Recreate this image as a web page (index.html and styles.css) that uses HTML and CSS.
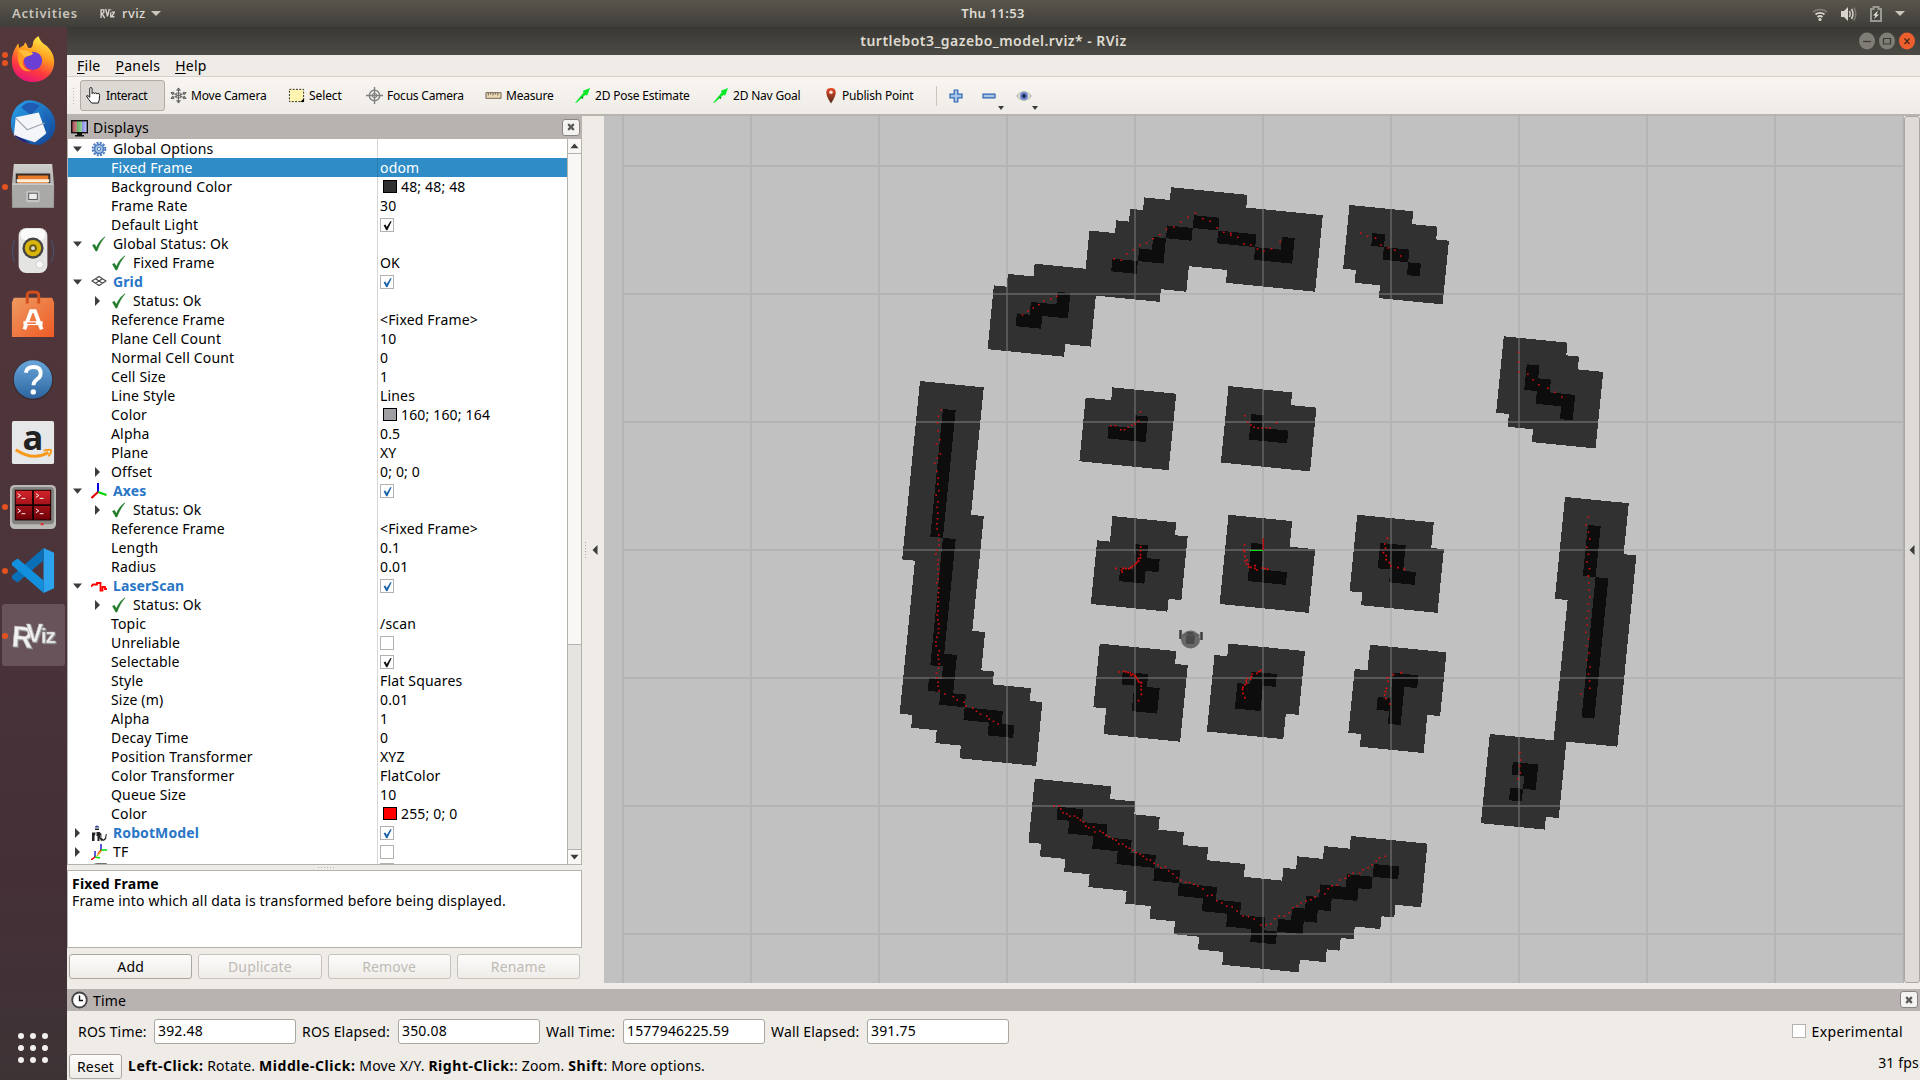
FILE: index.html
```html
<!DOCTYPE html>
<html lang="en">
<head>
<meta charset="utf-8">
<title>turtlebot3_gazebo_model.rviz* - RViz</title>
<link rel="stylesheet" href="styles.css">
</head>
<body>
<svg class="defs" width="0" height="0">
  <defs>
    <linearGradient id="fx" x1="0.7" y1="0" x2="0.3" y2="1"><stop offset="0" stop-color="#fff14a"/><stop offset=".4" stop-color="#ff9a1f"/><stop offset=".7" stop-color="#ff3b3f"/><stop offset="1" stop-color="#e3127c"/></linearGradient>
    <linearGradient id="tb" x1="0" y1="0" x2="1" y2="1"><stop offset="0" stop-color="#2aa4ee"/><stop offset="1" stop-color="#123f8f"/></linearGradient>
    <linearGradient id="mt" x1="0" y1="0" x2="0" y2="1"><stop offset="0" stop-color="#d0d0ce"/><stop offset="1" stop-color="#8c8c8a"/></linearGradient>
    <linearGradient id="hp" x1="0" y1="0" x2="0" y2="1"><stop offset="0" stop-color="#68a6da"/><stop offset="1" stop-color="#2d659f"/></linearGradient>
    <linearGradient id="sw" x1="0" y1="0" x2="1" y2="1"><stop offset="0" stop-color="#ee9a62"/><stop offset="1" stop-color="#ee5a24"/></linearGradient>
    <linearGradient id="rd" x1="0" y1="0" x2="0" y2="1"><stop offset="0" stop-color="#d3242a"/><stop offset="1" stop-color="#700008"/></linearGradient>
    <linearGradient id="pin" x1="0" y1="0" x2="0" y2="1"><stop offset="0" stop-color="#ea4a2a"/><stop offset="1" stop-color="#4a2c1a"/></linearGradient>
    <linearGradient id="scr" x1="0" y1="0" x2="1" y2="0"><stop offset="0" stop-color="#a84a50"/><stop offset=".33" stop-color="#c08a88"/><stop offset=".34" stop-color="#5fb45f"/><stop offset=".66" stop-color="#9ad09a"/><stop offset=".67" stop-color="#8c8cf0"/><stop offset="1" stop-color="#c8c8f8"/></linearGradient>
    <symbol id="check" viewBox="0 0 16 16"><path d="M1.500 9.200 3.400 8.300 5.400 11.500C7.500 6.500 10.500 3 14 .8 10.500 5 8 9.500 6 15H4.800Z" fill="#1e7a26" stroke="#1e7a26" stroke-width=".5"/></symbol>
    <symbol id="down" viewBox="0 0 10 6"><path d="M.5.5h9L5 5.700Z" fill="#3c3c3a"/></symbol>
    <symbol id="open" viewBox="0 0 19 10"><path d="M5 2.500h9L9.500 7.700Z" fill="#3c3c3a"/></symbol>
    <symbol id="right" viewBox="0 0 6 10"><path d="M.5 0v10L5.500 5Z" fill="#3c3c3a"/></symbol>
    <symbol id="tick" viewBox="0 0 14 14"><path d="M2.800 6.800 4.800 5.800l1.400 2.800L10 2.300h1.500L6.900 12H5.600Z" fill="currentColor"/></symbol>
    <symbol id="arrow2d" viewBox="0 0 18 18"><path d="M1 17 10 6 9.500 4 17 1 14 9 12 8.500 3 16.500Z" fill="#0be82c"/><path d="m7 10 3 1-1 2Z" fill="#087a18"/></symbol>
    <symbol id="close" viewBox="0 0 10 10"><path d="M1 1h2.500L5 3l1.500-2H9v2L7 5l2 2v2H6.500L5 7 3.500 9H1V7l2-2-2-2Z" fill="#5a5a58"/></symbol>
  </defs>
</svg>

<header class="topbar">
  <div class="top-left"><span>Activities</span><svg class="rvmini" viewBox="0 0 16 12"><path d="M1 11V2h3v3L2 6l3 5M6 1l2 8 2-8M11.500 5v5M12.500 4.500h3l-3 5h3M11.500 1.500v1" fill="none" stroke="#d8d5cf" stroke-width="1.500"/></svg><span>rviz</span><i class="tri"></i></div>
  <div class="clock">Thu 11:53</div>
  <div class="tray">
    <svg width="16" height="16" viewBox="0 0 16 16" fill="none" stroke-width="1.700"><path d="M1 6a10 8 0 0 1 14 0" stroke="#7d7b74"/><path d="M3.500 8.500a6.500 5.500 0 0 1 9 0M5.500 11a4 4 0 0 1 5 0" stroke="#d8d5cf"/><circle cx="8" cy="13.500" r="1.600" fill="#d8d5cf"/></svg>
    <svg width="17" height="16" viewBox="0 0 17 16"><path d="M1 5h3l4-4v14L4 11H1Z" fill="#d8d5cf"/><path d="M9.500 5q1.500 3 0 6M11.500 3q3 5 0 10" stroke="#d8d5cf" stroke-width="1.500" fill="none"/><path d="M14 1.500q3.500 6.500 0 13" stroke="#7d7b74" stroke-width="1.500" fill="none"/></svg>
    <svg width="14" height="18" viewBox="0 0 14 18"><path d="M2 4h2.500V2h5v2H12v12H2Z" stroke="#9a9892" stroke-width="2" fill="none"/><path d="M9 5.500 4 10.500h2.500L5 14l5-4.500H7.500Z" fill="#e6e4de"/></svg>
    <i class="tri"></i>
  </div>
</header>

<div class="desktop">
<nav class="dock">
  <div class="app"><i class="dot d1"></i><i class="dot d2"></i><svg viewBox="0 0 48 50"><path d="M24 50C10 50 1 40 1 28 1 20 4 14 8 8l1 5 5-3c1-2 1-3 2-3l3 6c4 1 5-3 5-6 1-3 3-5 6-7 2 6 5 8 9 11 5 5 8 10 8 17 0 13-10 22-23 22Z" fill="url(#fx)"/><circle cx="24" cy="27" r="10" fill="#6b3fd4"/><path d="M8 14c5-1 12 0 16 5-3 3-7 2-10 6-3 5 1 12 8 13-10 2-17-6-14-24Z" fill="#ff9b22"/><path d="M8 15c6 0 12 1 16 4-3 3-6 2-9 4Z" fill="#ffbd3c"/></svg></div>
  <div class="app"><svg viewBox="0 0 48 48"><path d="M12 3C20-3 34 2 42 11c8 10 7 24-2 31l-8 5C15 46 0 42 1 22 2 13 6 6 12 3Z" fill="url(#tb)"/><path d="M12 8c3-6 12-7 19-2L22 16Z" fill="#1d5cb0"/><path d="m6 18 24-5 8 22-12 9L4 37Z" fill="#f4f5f8"/><path d="m6 19 12 12 18-7" fill="none" stroke="#9ea6b2" stroke-width="1.200"/><path d="M4 36c5 6 12 9 17 9l-7-4Z" fill="#2b1a6e"/><path d="M34 12c8 6 10 18 1 27 8-10 3-20-1-27Z" fill="#1b60b8"/></svg></div>
  <div class="app"><i class="dot"></i><svg viewBox="0 0 48 48"><path d="M4 0h40l2 22v24H2V22Z" fill="url(#mt)"/><path d="M6 10h36v12H6Z" fill="#332c28"/><path d="M8 12h32v10H8Z" fill="#e87a28"/><path d="M7 16h34v3H7Z" fill="#fff0dc"/><path d="M3 20h42v25H3Z" fill="#a9aaa8"/><path d="M3 20h42v2H3Z" fill="#c8c8c6"/><rect x="17" y="28" width="14" height="12" rx="2" fill="#c4c4c2"/><rect x="19.500" y="30.500" width="9" height="6.500" fill="#eee" stroke="#555"/></svg></div>
  <div class="app"><svg viewBox="0 0 48 48"><path d="M5 12q-5 12 0 24M43 12q5 12 0 24" fill="none" stroke="#48506e" stroke-width="1.200"/><rect x="9" y="0" width="30" height="47" rx="8" fill="#e4e5e3"/><rect x="11" y="1" width="26" height="12" rx="6" fill="#fafafa"/><circle cx="24" cy="21" r="11" fill="#444"/><circle cx="24" cy="21" r="8.500" fill="#d8b40c"/><circle cx="24" cy="21" r="4" fill="#6e5c10"/><circle cx="24" cy="21" r="2" fill="#ddd"/><circle cx="31" cy="38" r="4" fill="#f7f7f7" stroke="#ccc"/></svg></div>
  <div class="app"><svg viewBox="0 0 48 48"><path d="M18 11V3q0-3 6-3t6 3v8" fill="none" stroke="#d24f1d" stroke-width="3"/><path d="M4 6h40l2 5v36H2V11Z" fill="url(#sw)"/><path d="M18 12V6M30 12V6" stroke="#d24f1d" stroke-width="3"/><path d="m15 39 7-19h4l7 19" fill="none" stroke="#fff" stroke-width="4"/><path d="M14 32.500h20" stroke="#fff" stroke-width="4"/><path d="M18 32.500h9" stroke="#ee6a30" stroke-width="1.500"/></svg></div>
  <div class="app"><svg viewBox="0 0 48 48"><circle cx="24" cy="25" r="21" fill="#3a2a30"/><circle cx="24" cy="24.500" r="20" fill="url(#hp)"/><path d="M16.500 17.500q1-6 8-6 7.500 0 7.500 6.500 0 4-4 6.500-3.500 2.500-3.500 6" fill="none" stroke="#fff" stroke-width="4"/><circle cx="24.300" cy="37.500" r="2.800" fill="#fff"/></svg></div>
  <div class="app"><svg viewBox="0 0 48 48"><rect x="2" y="1" width="44" height="45" rx="2" fill="#e6e7e8"/><text x="24" y="31" class="amz">a</text><path d="M6 31q18 12 34 3" fill="none" stroke="#f79a1c" stroke-width="3"/><path d="M35 32q8-2 8 0t-3 6" fill="none" stroke="#f79a1c" stroke-width="2"/></svg></div>
  <div class="app"><i class="dot"></i><svg viewBox="0 0 48 48"><rect x="0" y="1" width="48" height="46" rx="5" fill="#b9bab5"/><rect x="2" y="3" width="44" height="39" rx="4" fill="#83847f"/><rect x="5" y="6" width="38" height="32" fill="#170002"/><path d="M6 7h17v14H6ZM25 7h17v14H25ZM6 23h17v14H6ZM25 23h17v14H25Z" fill="url(#rd)"/><path d="m8 10 3 2-3 2m4 1h4M27 10l3 2-3 2m4 1h4M8 26l3 2-3 2m4 1h4M27 26l3 2-3 2m4 1h4" fill="none" stroke="#fff" stroke-width="1"/><path d="M32 42h3" stroke="#e22" stroke-width="2"/></svg></div>
  <div class="app"><i class="dot"></i><svg viewBox="0 0 48 48"><path d="M35 0 46 5v37l-11 5Z" fill="#2da3ee"/><path d="M35 0v13L8 36l-6-4v-3Z" fill="#0a6fb6"/><path d="M35 47V34L8 11l-6 4v3Z" fill="#1390dd"/></svg></div>
  <div class="app active"><i class="dot"></i><svg viewBox="0 0 48 48"><g class="rvz"><text x="1" y="36" class="r1" transform="rotate(5 4 36)">R</text><text x="17" y="31" class="r2">V</text><text x="32" y="32" class="r3">iz</text></g></svg></div>
  <div class="grid-btn"><i></i><i></i><i></i><i></i><i></i><i></i><i></i><i></i><i></i></div>
</nav>

<main class="window">
  <div class="titlebar"><span>turtlebot3_gazebo_model.rviz* - RViz</span>
    <div class="winbtns">
      <svg viewBox="0 0 16 20"><ellipse cx="8" cy="10" rx="8" ry="8.500" fill="#7f7d76"/><path d="M4 10.500h8" stroke="#3c3b37" stroke-width="1.200"/></svg>
      <svg viewBox="0 0 16 20"><ellipse cx="8" cy="10" rx="8" ry="8.500" fill="#7f7d76"/><path d="M4.500 7.500h7v5.500h-7Z" fill="none" stroke="#3c3b37" stroke-width="1.200"/></svg>
      <svg viewBox="0 0 16 20"><ellipse cx="8" cy="10" rx="8" ry="8.500" fill="#ee5f30"/><path d="m5.500 7.500 5 5.500m0-5.500-5 5.500" stroke="#4a2a1a" stroke-width="1.300"/></svg>
    </div>
  </div>
  <div class="menubar"><span><u>F</u>ile</span><span><u>P</u>anels</span><span><u>H</u>elp</span></div>
  <div class="toolbar">
    <i class="grip"></i>
    <div class="tool t1 on"><svg viewBox="0 0 18 18"><path d="M5 11V2q0-1.500 1.200-1.500T7.500 2v5q.2-1 1.300-1T10 7q.2-.8 1.300-.8T12.500 7.500q.2-.8 1.300-.8 1.700 0 1.700 2.300 0 5-1.500 8H7Q3.500 13 1.500 9.500 3 8 5 11Z" fill="#fff" stroke="#111"/></svg>Interact</div>
    <div class="tool t2"><svg viewBox="0 0 18 18"><path d="M9 1v16M1 6l16 6M1 12l16-6M9 1 7 3.500h4ZM9 17l-2-2.500h4ZM1 6l3-.5-1 3ZM17 12l-3 .5 1-3ZM1 12l3 .5-1-3ZM17 6l-3-.5 1 3ZM6.500 6.500h5v5h-5Z" fill="#fff" stroke="#555" stroke-width=".9"/></svg>Move Camera</div>
    <div class="tool t3"><svg viewBox="0 0 18 18"><rect x="1.500" y="2.500" width="15" height="13" fill="#fff3b0" stroke="#222" stroke-dasharray="2 1.500"/><path d="M17 12v4h-4Z"/></svg>Select</div>
    <div class="tool t4"><svg viewBox="0 0 18 18"><g fill="none" stroke="#808080"><circle cx="9" cy="9" r="5.500" stroke-width="1.500"/><circle cx="9" cy="9" r="2.500"/><path d="M9 0v18M0 9h18" stroke-width="1.500"/></g></svg>Focus Camera</div>
    <div class="tool t5"><svg viewBox="0 0 18 18"><path d="M1 6h16v6H1Z" fill="#e8d8b4" stroke="#6e6250"/><path d="M3.500 6v3M6 6v2M8.500 6v3M11 6v2M13.500 6v3" stroke="#6e6250"/></svg>Measure</div>
    <div class="tool t6"><svg><use href="#arrow2d"/></svg>2D Pose Estimate</div>
    <div class="tool t7"><svg><use href="#arrow2d"/></svg>2D Nav Goal</div>
    <div class="tool t8"><svg viewBox="0 0 14 18"><path d="M7 17.500Q2 10 2 5.500 2 1 7 1t5 4.500Q12 10 7 17.500Z" fill="url(#pin)"/><circle cx="7" cy="5.500" r="1.900" fill="#ffe0d8"/></svg>Publish Point</div>
    <i class="sep"></i>
    <svg class="tb" viewBox="0 0 14 14"><path d="M5.200 1h3.600v4.200H13v3.600H8.800V13H5.200V8.800H1V5.200h4.200Z" fill="#a9c6ea" stroke="#2f66b0" stroke-width="1.200"/></svg>
    <svg class="tb" viewBox="0 0 14 14"><path d="M1 5.200h12v3.600H1Z" fill="#a9c6ea" stroke="#2f66b0" stroke-width="1.200"/></svg>
    <i class="mini"></i>
    <svg class="tb eye" viewBox="0 0 16 14"><path d="M.5 7Q8-2 15.500 7 8 16 .5 7Z" fill="#dcdcdc" stroke="#aaa"/><circle cx="8" cy="7" r="3.800" fill="#5a7cc4"/><circle cx="8" cy="7" r="1.700" fill="#111c3c"/></svg>
    <i class="mini"></i>
  </div>

  <div class="work">
    <section class="displays">
      <div class="phead"><svg width="17" height="18" viewBox="0 0 17 18"><rect x=".7" y="1.700" width="15.600" height="12" fill="url(#scr)" stroke="#111" stroke-width="1.400"/><path d="M6 14h5v2h2v1.500H4V16h2Z" fill="#111"/></svg><span>Displays</span><b class="x"><svg><use href="#close"/></svg></b></div>
      <div class="treebox">
        <div class="tree">
          <div class="row"><div class="n"><svg class="tw"><use href="#open"/></svg><svg class="ic" viewBox="0 0 16 16"><circle cx="8" cy="8" r="6.300" fill="none" stroke="#4a78bc" stroke-width="2" stroke-dasharray="2 1.300"/><circle cx="8" cy="8" r="4.500" fill="#a7c4e6" stroke="#4a78bc" stroke-width="1.500"/><circle cx="8" cy="8" r="1.600" fill="#fff" stroke="#4a78bc"/></svg>Global Options</div><div class="v"></div></div>
          <div class="row sel"><div class="n p">Fixed Frame</div><div class="v">odom</div></div>
          <div class="row"><div class="n p">Background Color</div><div class="v"><i class="sw dark"></i>48; 48; 48</div></div>
          <div class="row"><div class="n p">Frame Rate</div><div class="v">30</div></div>
          <div class="row"><div class="n p">Default Light</div><div class="v"><i class="cb"><svg><use href="#tick"/></svg></i></div></div>
          <div class="row"><div class="n"><svg class="tw"><use href="#open"/></svg><svg class="ic"><use href="#check"/></svg>Global Status: Ok</div><div class="v"></div></div>
          <div class="row"><div class="n l1"><i class="tw"></i><svg class="ic"><use href="#check"/></svg>Fixed Frame</div><div class="v">OK</div></div>
          <div class="row"><div class="n hd"><svg class="tw"><use href="#open"/></svg><svg class="ic" viewBox="0 0 16 16"><path d="m8 2.500 7 4.500-7 4.500L1 7Zm-3.500 2.300 7 4.500m0-4.500-7 4.500" fill="none" stroke="#444" stroke-width="1.100"/></svg>Grid</div><div class="v"><i class="cb blue"><svg><use href="#tick"/></svg></i></div></div>
          <div class="row"><div class="n l1"><svg class="tw"><use href="#right"/></svg><svg class="ic"><use href="#check"/></svg>Status: Ok</div><div class="v"></div></div>
          <div class="row"><div class="n p">Reference Frame</div><div class="v">&lt;Fixed Frame&gt;</div></div>
          <div class="row"><div class="n p">Plane Cell Count</div><div class="v">10</div></div>
          <div class="row"><div class="n p">Normal Cell Count</div><div class="v">0</div></div>
          <div class="row"><div class="n p">Cell Size</div><div class="v">1</div></div>
          <div class="row"><div class="n p">Line Style</div><div class="v">Lines</div></div>
          <div class="row"><div class="n p">Color</div><div class="v"><i class="sw gray"></i>160; 160; 164</div></div>
          <div class="row"><div class="n p">Alpha</div><div class="v">0.5</div></div>
          <div class="row"><div class="n p">Plane</div><div class="v">XY</div></div>
          <div class="row"><div class="n l1"><svg class="tw"><use href="#right"/></svg>Offset</div><div class="v">0; 0; 0</div></div>
          <div class="row"><div class="n hd"><svg class="tw"><use href="#open"/></svg><svg class="ic" viewBox="0 0 16 16" fill="none" stroke-width="2"><path d="M7 0v9" stroke="#0000e0"/><path d="m7 9 8.500 3" stroke="#00d800"/><path d="m7 9-6.500 6" stroke="#e00000"/></svg>Axes</div><div class="v"><i class="cb blue"><svg><use href="#tick"/></svg></i></div></div>
          <div class="row"><div class="n l1"><svg class="tw"><use href="#right"/></svg><svg class="ic"><use href="#check"/></svg>Status: Ok</div><div class="v"></div></div>
          <div class="row"><div class="n p">Reference Frame</div><div class="v">&lt;Fixed Frame&gt;</div></div>
          <div class="row"><div class="n p">Length</div><div class="v">0.1</div></div>
          <div class="row"><div class="n p">Radius</div><div class="v">0.01</div></div>
          <div class="row"><div class="n hd"><svg class="tw"><use href="#open"/></svg><svg class="ic" viewBox="0 0 16 16"><path d="M0 8.500 2 6.500h4V5h3.500v7.500h2V9h2.500v2h2" fill="none" stroke="#f00" stroke-width="1.800"/></svg>LaserScan</div><div class="v"><i class="cb blue"><svg><use href="#tick"/></svg></i></div></div>
          <div class="row"><div class="n l1"><svg class="tw"><use href="#right"/></svg><svg class="ic"><use href="#check"/></svg>Status: Ok</div><div class="v"></div></div>
          <div class="row"><div class="n p">Topic</div><div class="v">/scan</div></div>
          <div class="row"><div class="n p">Unreliable</div><div class="v"><i class="cb"></i></div></div>
          <div class="row"><div class="n p">Selectable</div><div class="v"><i class="cb"><svg><use href="#tick"/></svg></i></div></div>
          <div class="row"><div class="n p">Style</div><div class="v">Flat Squares</div></div>
          <div class="row"><div class="n p">Size (m)</div><div class="v">0.01</div></div>
          <div class="row"><div class="n p">Alpha</div><div class="v">1</div></div>
          <div class="row"><div class="n p">Decay Time</div><div class="v">0</div></div>
          <div class="row"><div class="n p">Position Transformer</div><div class="v">XYZ</div></div>
          <div class="row"><div class="n p">Color Transformer</div><div class="v">FlatColor</div></div>
          <div class="row"><div class="n p">Queue Size</div><div class="v">10</div></div>
          <div class="row"><div class="n p">Color</div><div class="v"><i class="sw red"></i>255; 0; 0</div></div>
          <div class="row"><div class="n hd"><svg class="tw"><use href="#right"/></svg><svg class="ic" viewBox="0 0 16 16"><path d="M3.500 2.500q2.500-4 5 0Z" fill="#2a3f9a"/><path d="M4 3.500h4V5H4ZM1 7.500h3v3H3.500V16H1V7.500ZM5.500 7h3l2 2v4l2 1.500 1.500-1.500.8-4h1l-.8 5-2 1.800h-3L8.500 13v3H6.500v-5h-1Z" fill="#222"/><path d="M4 7h1.200v3H4ZM9.500 10h1v3h-1Z" fill="#bbb"/></svg>RobotModel</div><div class="v"><i class="cb blue"><svg><use href="#tick"/></svg></i></div></div>
          <div class="row"><div class="n"><svg class="tw"><use href="#right"/></svg><svg class="ic" viewBox="0 0 16 16" fill="none" stroke-width="1.500"><path d="M10 0v6M4 7v6" stroke="#22c"/><path d="M10 6h6M4 13l5 1" stroke="#0d0"/><path d="m10 6-3 4M4 13l-4 3" stroke="#e00"/><path d="m10 7-4 5" stroke="#e8b020"/></svg>TF</div><div class="v"><i class="cb"></i></div></div>
          <div class="row"><div class="n"><i class="tw"></i><svg class="ic up1" viewBox="0 0 16 16"><path d="M1 14V3l5-1h9v12Z" fill="#ccc" stroke="#444" stroke-width="1.500"/></svg></div><div class="v"><i class="cb up1"></i></div></div>
        </div>
        <div class="scroll"><div class="sb"><svg class="up"><use href="#down"/></svg></div><div class="thumb"></div><div class="track"></div><div class="sb"><svg><use href="#down"/></svg></div></div>
      </div>
      <div class="hsplit"></div>
      <div class="desc"><b>Fixed Frame</b><br>Frame into which all data is transformed before being displayed.</div>
      <div class="btns"><div class="btn">Add</div><div class="btn off">Duplicate</div><div class="btn off">Remove</div><div class="btn off">Rename</div></div>
    </section>
    <div class="vsplit"><i></i><svg><use href="#right"/></svg></div>
    <svg class="view" viewBox="604 116 1300 867">
      <rect x="604" y="116" width="1300" height="867" fill="#c1c1c1"/>
      <g transform="matrix(12.747 1.272 -1.272 12.747 920 381)" shape-rendering="crispEdges">
        <g fill="#313131">
          <path d="M0 0h5v10h1v9h1v3h1v1h3v1h1v5h-6v-1h-2v-1h-2v-1h-1v-12h-1Z"/>
          <path d="M18-17h6v1h6v6h-7v-1h-3v2h-2v1h-5v4h-2v1h-6v-5h1v-1h2v-1h4v-3h2v-1h1v-1h1v-1h2Z"/>
          <path d="M32-17h5v1h2v1h1v5h-5v-1h-2v-1h-1Z"/>
          <path d="M45-8h5v1h1v1h2v6h-5v-1h-2v-1h-1Z"/>
          <path d="M15-1h5v6h-7v-5h2Z"/>
          <path d="M24-2h5v1h2v5h-7Z"/>
          <path d="M16 9h5v1h1v5h-1v1h-6v-5h1Z"/>
          <path d="M25 8h5v2h2v5h-7Z"/>
          <path d="M35 7h6v2h1v5h-6v-1h-1Z"/>
          <path d="M16 19h6v1h1v6h-6v-2h-1Z"/>
          <path d="M26 18h6v5h-1v2h-6v-6h1Z"/>
          <path d="M37 17h6v5h-1v3h-5v-1h-1v-5h1Z"/>
          <path d="M51 4h5v4h1v15h-4v6h-1v1h-5v-7h5v-11h-1Z"/>
          <path d="M12 30h6v1h2v1h2v1h2v1h2v1h3v1h3v-1h1v-1h2v-1h2v-1h6v5h-2v1h-1v1h-2v1h-1v1h-1v1h-2v1h-6v-1h-2v-1h-2v-1h-2v-1h-2v-1h-3v-1h-2v-1h-2v-1h-1Z"/>
        </g>
        <path fill="#0d0d0d" d="M2 2h1v10h-1ZM3 12h1v10h-1ZM4 21h1v3h-1ZM3 23h1v1h-1ZM4 24h2v1h-2ZM6 25h3v1h-3ZM8 26h2v1h-2Z
          M20-15h2v1h-2ZM18-14h2v1h-2ZM17-13h1v2h-1ZM16-12h2v1h-2ZM14-11h2v1h-2ZM22-14h3v1h-3ZM25-13h3v1h-3ZM27-14h1v1h-1ZM10-8h1v2h-1ZM8-7h2v1h-2ZM7-6h2v1h-2Z
          M34-15h1v1h-1ZM35-14h2v1h-2ZM37-13h1v1h-1ZM47-6h1v2h-1ZM48-5h1v2h-1ZM49-4h2v1h-2ZM50-3h1v1h-1Z
          M15 2h3v1h-3ZM17 1h1v1h-1ZM26 0h1v2h-1ZM26 1h3v1h-3ZM18 11h1v3h-1ZM17 13h1v1h-1ZM19 12h1v1h-1ZM27 10h1v3h-1ZM28 12h2v1h-2Z
          M37 9h2v2h-2ZM38 11h2v1h-2ZM18 21h2v1h-2ZM19 22h2v2h-2ZM28 20h2v1h-2ZM27 21h2v2h-2ZM39 19h2v1h-2ZM39 20h1v3h-1ZM38 21h1v1h-1Z
          M53 6h1v4h-1ZM54 10h1v11h-1ZM49 25h2v1h-2ZM50 26h1v1h-1ZM49 27h1v1h-1Z
          M14 32h2v1h-2ZM15 33h3v1h-3ZM17 34h3v1h-3ZM19 35h3v1h-3ZM22 36h2v1h-2ZM24 37h3v1h-3ZM26 38h3v1h-3ZM28 39h3v1h-3ZM30 40h2v1h-2ZM32 39h2v1h-2ZM33 38h2v1h-2ZM34 37h2v1h-2ZM35 36h3v1h-3ZM37 35h2v1h-2ZM39 34h2v1h-2Z"/>
      </g>
      <path class="gl" d="M623 116v867M751 116v867M879 116v867M1007 116v867M1135 116v867M1263 116v867M1391 116v867M1519 116v867M1647 116v867M1775 116v867M1903.500 116v867M623 166h1281M623 294h1281M623 422h1281M623 550h1281M623 678h1281M623 806h1281M623 934h1281"/>
      <g class="scan">
        <path transform="translate(960 170) scale(.3333)" d="M185 435h5M201 424h5M217 414h5M234 404h5M249 392h5M270 387h5M288 379h5M460 267h5M481 271h5M498 251h5M518 239h5M537 226h5M557 219h5M577 206h5M597 194h5M617 177h5M639 171h5M660 156h5M682 142h5M704 129h5M726 146h5M748 154h5M769 173h5M789 187h5M810 190h5M810 196h5M831 202h5M849 222h5M870 225h5M890 237h5M909 243h5M932 236h5M958 215h5M1200 189h5M1220 199h5M1244 204h5M1260 225h5M1283 234h5M1302 241h5M1320 258h5M450 767h5M464 767h5M480 779h5M491 779h5M502 771h5M513 766h5M523 762h5M533 753h5M539 725h5M852 737h5M861 757h5M870 765h5M880 772h5M892 774h5M904 774h5M917 774h5M928 775h5M947 759h5"/>
        <path transform="translate(1440 300) scale(.3333)" d="M233 157h5M233 187h5M234 217h5M261 223h5M277 239h5M294 254h5M321 265h5M342 277h5M363 291h5M443 651h5M435 675h5M443 697h5M447 717h5M438 742h5M443 763h5M438 785h5M446 806h5M443 828h5"/>
        <path transform="translate(880 370) scale(.3333)" d="M181 120h5M173 139h5M170 158h5M171 182h5M177 209h5M167 222h5M179 252h5M170 265h5M162 280h5M168 303h5M172 325h5M171 343h5M174 362h5M166 376h5M171 395h5M169 412h5M171 429h5M170 446h5M168 461h5M169 477h5M174 495h5M174 511h5M175 525h5M169 540h5M165 553h5M172 570h5M171 583h5M171 598h5M173 612h5M172 626h5M168 639h5M174 655h5M173 668h5M172 682h5M173 695h5M171 709h5M172 722h5M169 735h5M171 749h5M174 762h5M173 776h5M173 789h5M168 802h5M165 815h5M166 828h5M175 842h5M172 855h5M173 868h5M175 882h5M173 895h5M167 909h5M169 923h5M172 937h5M172 949h5M175 962h5M192 972h5M218 980h5M229 990h5M250 997h5M255 1009h5M276 1015h5M287 1024h5M299 1033h5M318 1038h5M325 1047h5M338 1054h5M352 1062h5"/>
        <path class="near" transform="translate(1060 480) scale(.3333)" d="M165 265h5M182 270h5M184 276h5M187 265h5M195 266h5M204 266h5M210 263h5M215 259h5M221 255h5M226 250h5M230 245h5M233 236h5M239 233h5M234 243h5M239 224h5M239 212h5M240 201h5M551 195h5M548 210h5M551 215h5M552 229h5M553 243h5M559 240h5M557 252h5M563 253h5M564 261h5M570 262h5M583 257h5M582 265h5M588 270h5M604 264h5M613 266h5M621 268h5M980 175h5M972 192h5M974 205h5M968 218h5M976 227h5M976 239h5M986 248h5M990 258h5M1012 263h5M1031 268h5M175 576h5M188 574h5M195 576h5M202 577h5M209 579h5M211 586h5M216 583h5M222 587h5M226 592h5M230 597h5M232 603h5M236 607h5M242 608h5M241 618h5M241 629h5M242 643h5M233 662h5M600 571h5M595 575h5M588 580h5M574 582h5M572 590h5M570 597h5M559 596h5M556 603h5M557 610h5M552 615h5M546 622h5M545 628h5M547 640h5M552 653h5M1021 578h5M998 584h5M980 593h5M982 604h5M977 625h5M974 635h5M972 645h5M975 656h5M987 672h5"/>
        <path transform="translate(1010 740) scale(.3333)" d="M130 199h5M145 197h5M150 207h5M157 218h5M168 222h5M177 229h5M191 228h5M200 233h5M209 241h5M218 247h5M225 259h5M234 263h5M249 261h5M252 276h5M267 273h5M277 278h5M286 286h5M295 290h5M306 297h5M316 301h5M324 312h5M336 312h5M346 320h5M356 325h5M366 331h5M376 338h5M387 343h5M397 349h5M407 358h5M419 360h5M430 370h5M441 375h5M451 384h5M464 380h5M474 393h5M486 401h5M499 413h5M510 421h5M524 427h5M536 428h5M549 433h5M561 438h5M576 447h5M590 467h5M603 466h5M618 482h5M633 489h5M648 498h5M664 500h5M679 513h5M697 528h5M713 530h5M730 537h5M750 555h5M766 555h5M780 552h5M792 536h5M805 528h5M821 528h5M835 518h5M846 503h5M859 497h5M870 489h5M886 483h5M900 479h5M913 472h5M923 453h5M942 462h5M952 446h5M963 437h5M979 435h5M987 420h5M1003 415h5M1014 407h5M1027 399h5M1047 400h5M1057 389h5M1072 383h5M1084 374h5M1096 363h5M1106 353h5M1123 349h5"/>
        <path transform="translate(1420 540) scale(.3333)" d="M503 108h5M504 129h5M504 151h5M507 171h5M503 192h5M503 214h5M497 235h5M499 255h5M495 277h5M503 297h5M497 318h5M505 339h5M498 359h5M508 381h5M503 402h5M506 423h5M507 445h5M480 463h5M297 638h5M300 660h5M297 678h5M298 698h5M291 716h5"/>
      </g>
      <path d="M1263.300 538v12" stroke="#b00f14" stroke-width="1.500"/><path d="M1250 550.500h13" stroke="#0be010" stroke-width="1"/>
      <path d="M1180.500 630v9M1201.500 632v8" stroke="#3c3c3c" stroke-width="2.500"/><ellipse cx="1190.500" cy="639.500" rx="9.500" ry="9" fill="#686868"/><path d="M1187 632h6l2 5-1 7h-8v-6Z" fill="#4a4a4a"/><path d="M1182 635h18" stroke="#585858"/>
    </svg>
    <div class="rsplit"><svg><use href="#right"/></svg></div>
  </div>

  <div class="phead time"><svg width="17" height="18" viewBox="0 0 17 18"><ellipse cx="8.500" cy="9" rx="7.300" ry="7.500" fill="#fff" stroke="#444" stroke-width="1.800"/><path d="M8.500 4.500V9.500H12" fill="none" stroke="#111" stroke-width="1.400"/></svg><span>Time</span><b class="x"><svg><use href="#close"/></svg></b></div>
  <div class="fields">
    <label class="f1">ROS Time:</label><div class="in">392.48</div>
    <label class="f2">ROS Elapsed:</label><div class="in">350.08</div>
    <label class="f3">Wall Time:</label><div class="in">1577946225.59</div>
    <label class="f4">Wall Elapsed:</label><div class="in">391.75</div>
    <div class="exp"><i class="cb"></i>Experimental</div>
  </div>
  <div class="status"><div class="btn">Reset</div><div class="hint"><b>Left-Click:</b> Rotate. <b>Middle-Click:</b> Move X/Y. <b>Right-Click:</b>: Zoom. <b>Shift</b>: More options.</div><div class="fps">31 fps</div></div>
</main>
</div>
</body>
</html>
```
FILE: styles.css
```css
* { box-sizing: border-box; }
body {
  margin: 0; width: 1920px; height: 1080px; overflow: hidden;
  display: flex; flex-direction: column;
  font: 14px/19px "Noto Sans", sans-serif; letter-spacing: .17px;
  color: #000; background: #efebe7;
}
i { font-style: normal; }
svg { display: block; flex: none; }
.defs { position: absolute; }

/* top bar */
.topbar {
  height: 27px; flex: none; display: grid; grid-template-columns: 945px 72px 1fr; align-items: center;
  background: linear-gradient(#5a564e, #3f3e39); color: #dfdbd2; font-size: 13px;
  padding: 0 15px 0 12px;
}
.top-left { display: flex; align-items: center; }
.top-left span { font-weight: 500; letter-spacing: .4px; }
.top-left span:first-child { width: 88px; color: #c9c5bc; font-weight: 600; letter-spacing: .8px; }
.rvmini { width: 15px; height: 11px; margin-right: 7px; }
.tri { border: 5px solid transparent; border-top-color: #c9c5bc; border-bottom: 0; margin-left: 5px; }
.clock { font-weight: 600; text-align: center; letter-spacing: .3px; white-space: nowrap; }
.tray { display: flex; justify-content: flex-end; align-items: center; gap: 12px; }
.tray .tri { margin: 0; }

.desktop { flex: 1; display: flex; min-height: 0; }

/* dock */
.dock {
  width: 67px; flex: none; display: flex; flex-direction: column; align-items: center;
  background: linear-gradient(#54373a, #4b343a 50%, #452f37 80%, #3d3335);
}
.app { position: relative; width: 63px; height: 64px; display: flex; align-items: center; justify-content: center; margin-right: 1px; }
.app svg { width: 46px; height: 46px; overflow: visible; }
.app.active { height: 62px; margin-top: 1px; background: #68535a; border-radius: 3px; }
.dot { position: absolute; left: 0; top: 29px; width: 6px; height: 6px; border-radius: 3px; background: #e4521f; }
.d1 { top: 25px; }
.d2 { top: 33px; }
.amz { font: bold 36px "Open Sans", sans-serif; fill: #222; text-anchor: middle; }
.rvz { fill: #f0f0f0; stroke: #b0b0b0; stroke-width: .6; font-family: "Liberation Sans", sans-serif; font-weight: bold; letter-spacing: 0; filter: drop-shadow(1px 1px 0 #888); }
.r1 { font-size: 31px; }
.r2 { font-size: 26px; }
.r3 { font-size: 22px; letter-spacing: -1px; }
.grid-btn { margin: auto 1px 17px 0; display: grid; grid-template-columns: repeat(3, 6px); gap: 6px; }
.grid-btn i { width: 6px; height: 6px; border-radius: 3px; background: #f2f0ee; }

/* window chrome */
.window { flex: 1; min-width: 0; display: flex; flex-direction: column; }
.titlebar {
  height: 28px; flex: none; position: relative; text-align: center; line-height: 28px;
  background: linear-gradient(#393834, #4c4a44); color: #dfdbd2; font-weight: 600; font-size: 14px; letter-spacing: .45px;
}
.winbtns { position: absolute; right: 5px; top: 4px; display: flex; gap: 4px; }
.winbtns svg { width: 16px; height: 20px; }
.menubar { height: 22px; flex: none; display: flex; gap: 15px; padding: 1px 0 0 10px; border-bottom: 1px solid #d5d1cb; letter-spacing: .25px; }
.menubar u { text-underline-offset: 2px; }
.toolbar {
  height: 39px; flex: none; display: flex; align-items: center; padding: 0 0 0 5px;
  background: linear-gradient(#f9f6f1, #efebe6); border-bottom: 2px solid #b8b4ae;
  font-size: 12px; letter-spacing: -.2px;
}
.grip { width: 4px; height: 18px; margin-right: 4px; background: radial-gradient(circle, #bbb 0.8px, transparent 1px) 0 0/3px 3px; }
.tool { display: flex; align-items: center; height: 31px; padding-left: 5px; white-space: nowrap; }
.tool svg { width: 17px; height: 17px; margin-right: 4px; }
.on { background: #dcd8d4; border: 1px solid #b0aca6; border-radius: 3px; padding-left: 4px; }
.t1 { width: 85px; } .t2 { width: 118px; } .t3 { width: 78px; } .t4 { width: 119px; }
.t5 { width: 89px; } .t6 { width: 138px; } .t7 { width: 112px; } .t8 { width: 117px; }
.t1 { letter-spacing: -.35px; } .t3 { letter-spacing: -.1px; }
.t8 svg { width: 14px; margin-right: 4px; }
.sep { width: 1px; height: 20px; background: #c9c5bf; margin-right: 12px; }
.tb { width: 14px; height: 14px; margin-right: 19px; }
.mini { border: 3px solid transparent; border-top: 4px solid #3c3c3a; border-bottom: 0; margin: 24px 12px 0 -17px; width: 6px; }
.eye { width: 16px; margin-right: 17px; }

.work { display: flex; height: 873px; flex: none; }
.displays { width: 515px; height: 867px; display: flex; flex-direction: column; }
.phead { height: 23px; flex: none; display: flex; align-items: center; gap: 5px; padding: 0 2px 0 4px; background: #b8b3b0; }
.phead .x { margin: -1px 0 0 auto; width: 18px; height: 17px; border: 1px solid #888480; border-radius: 3px; background: #f5f3f1; display: grid; place-items: center; }
.x svg { width: 8px; height: 8px; }

/* property tree */
.treebox { display: flex; height: 726px; flex: none; border: solid #b5b1ab; border-width: 0 1px 1px; }
.tree { flex: 1; overflow: hidden; background: #fff; }
.row { display: grid; grid-template-columns: 310px 1fr; height: 19px; }
.n { display: flex; align-items: center; border-right: 1px solid #d6d6d6; white-space: nowrap; }
.p { padding-left: 43px; }
.l1 { padding-left: 20px; }
.hd { color: #2a76c6; font-weight: 700; letter-spacing: .1px; }
.tw { width: 19px; height: 10px; margin-right: 4px; }
.ic { width: 16px; height: 16px; margin-right: 6px; }
.up1 { margin-top: -2px; }
.v { display: flex; align-items: center; padding-left: 2px; }
.sel { background: #308cc6; color: #fff; }
.sel .n { border-color: #2a7db2; }
.sw { width: 14px; height: 13px; border: 1px solid #000; margin: 0 4px 0 3px; }
.dark { background: #303030; } .gray { background: #a0a0a4; } .red { background: #f00; }
.cb { width: 14px; height: 14px; background: #fff; border: 1px solid #b5b2ae; color: #111; flex: none; }
.cb svg { width: 13px; height: 13px; }
.blue { color: #1c62a8; }

.scroll { width: 14px; display: flex; flex-direction: column; border-left: 1px solid #b5b1ab; background: #e6e4e0; }
.sb { height: 14px; flex: none; display: grid; place-items: center; background: #f8f7f5; }
.sb svg { width: 9px; height: 6px; }
.sb .up { transform: rotate(180deg); }
.thumb { height: 492px; background: #f8f7f5; border: solid #b5b1ab; border-width: 1px 0; }
.track { flex: 1; border-bottom: 1px solid #b5b1ab; }

.hsplit { height: 5px; flex: none; background: repeating-linear-gradient(90deg, #b5b1ab 0 1px, transparent 1px 3px) 251px 2px/16px 1px no-repeat; }
.desc { height: 78px; flex: none; background: #fff; border: 1px solid #b5b1ab; padding: 4px 4px; line-height: 17px; }
.desc b { letter-spacing: .2px; }
.btns { display: grid; grid-template-columns: repeat(4, 1fr); gap: 6px; padding: 6px 2px 0; }
.btn { height: 25px; line-height: 23px; text-align: center; border: 1px solid #aaa6a0; border-radius: 3px; background: linear-gradient(#fdfcfb, #efece8); }
.off { color: #bebab5; border-color: #c6c2bc; }

.vsplit { width: 22px; height: 867px; display: flex; align-items: center; gap: 6px; padding-left: 3px; }
.vsplit i { width: 1px; height: 16px; background: repeating-linear-gradient(#aaa 0 1px, transparent 1px 3px); }
.vsplit svg, .rsplit svg { width: 6px; height: 10px; transform: rotate(180deg); }
.view { width: 1300px; height: 867px; }
.gl { fill: none; stroke: #a0a0a4; stroke-opacity: .5; stroke-width: 1.400; }
.scan { fill: none; stroke: #d81014; stroke-width: 4.500; }
.near { stroke: #f00a0a; stroke-width: 5; }
.rsplit { width: 16px; height: 867px; display: flex; align-items: center; padding-left: 4px; background: #dedad7; border: 1px solid #aaa6a2; border-radius: 3px; }

/* time panel */
.time { height: 22px; }
.fields { display: flex; align-items: center; height: 40px; padding: 0 17px 0 11px; }
.in { width: 142px; height: 25px; line-height: 22px; padding-left: 3px; margin-right: 6px; background: #fff; border: 1px solid #aaa6a0; border-radius: 3px; }
label { white-space: nowrap; }
.f1 { width: 76px; } .f2 { width: 96px; } .f3 { width: 77px; } .f4 { width: 96px; }
.exp { margin-left: auto; display: flex; align-items: center; gap: 6px; letter-spacing: .35px; }
.status { display: flex; padding: 3px 1px 0 2px; }
.status .btn { width: 53px; }
.hint { margin: 2px 0 0 6px; }
.hint b { letter-spacing: .55px; }
.fps { margin: -1px 0 0 auto; }
```
